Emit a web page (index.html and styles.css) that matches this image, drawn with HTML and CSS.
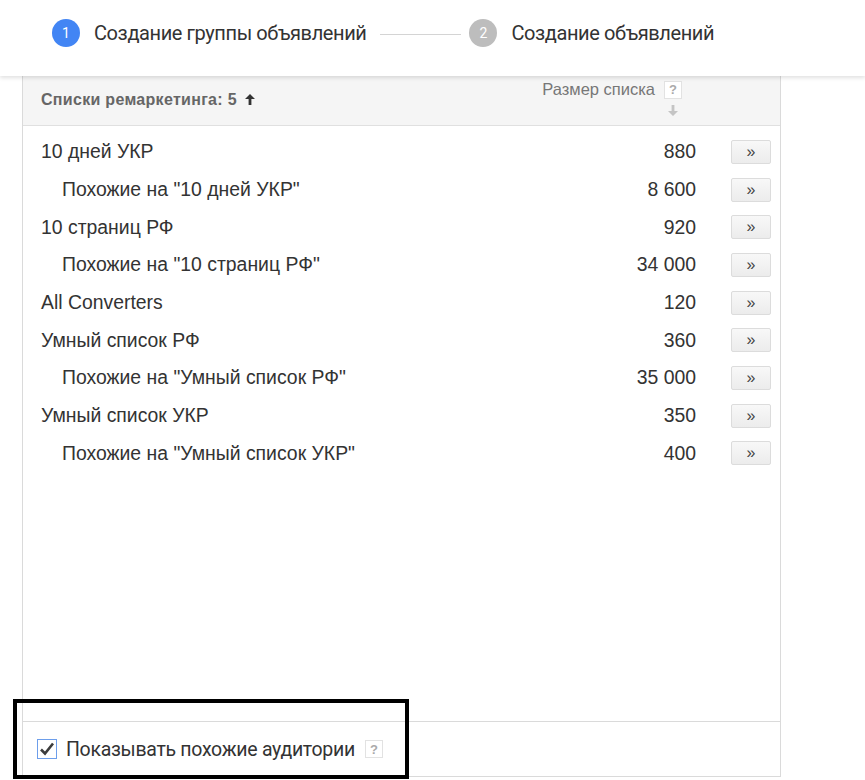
FILE: index.html
```html
<!DOCTYPE html>
<html lang="ru">
<head>
    <meta charset="UTF-8">
    <title>Создание группы объявлений</title>
    <link rel="stylesheet" href="styles.css">
</head>
<body>
    <div class="steps">
        <div class="step active">
            <span class="step-num">1</span>
            <span class="step-title">Создание группы объявлений</span>
        </div>
        <div class="step-line"></div>
        <div class="step">
            <span class="step-num">2</span>
            <span class="step-title">Создание объявлений</span>
        </div>
    </div>

    <div class="panel">
        <div class="panel-head">
            <div class="panel-title">
                Списки ремаркетинга: 5
                <svg class="sort-up" width="10" height="11" viewBox="0 0 10 11"><path d="M5 0 L10 5 L6.4 5 L6.4 11 L3.6 11 L3.6 5 L0 5 Z" fill="#333"/></svg>
            </div>
            <div class="size-col">
                <div class="size-label">Размер списка <span class="help">?</span></div>
                <svg class="sort-down" width="10" height="11" viewBox="0 0 10 11"><path d="M5 11 L10 6 L6.4 6 L6.4 0 L3.6 0 L3.6 6 L0 6 Z" fill="#c4c4c4"/></svg>
            </div>
        </div>

        <ul class="lists">
            <li class="row"><span class="name">10 дней УКР</span><span class="count">880</span><button class="add">&raquo;</button></li>
            <li class="row sub"><span class="name">Похожие на "10 дней УКР"</span><span class="count">8 600</span><button class="add">&raquo;</button></li>
            <li class="row"><span class="name">10 страниц РФ</span><span class="count">920</span><button class="add">&raquo;</button></li>
            <li class="row sub"><span class="name">Похожие на "10 страниц РФ"</span><span class="count">34 000</span><button class="add">&raquo;</button></li>
            <li class="row"><span class="name">All Converters</span><span class="count">120</span><button class="add">&raquo;</button></li>
            <li class="row"><span class="name">Умный список РФ</span><span class="count">360</span><button class="add">&raquo;</button></li>
            <li class="row sub"><span class="name">Похожие на "Умный список РФ"</span><span class="count">35 000</span><button class="add">&raquo;</button></li>
            <li class="row"><span class="name">Умный список УКР</span><span class="count">350</span><button class="add">&raquo;</button></li>
            <li class="row sub"><span class="name">Похожие на "Умный список УКР"</span><span class="count">400</span><button class="add">&raquo;</button></li>
        </ul>

        <div class="panel-foot">
            <label class="similar">
                <span class="checkbox">
                    <svg width="16" height="14" viewBox="0 0 16 14"><path d="M2 7.5 L6 11.5 L14 1.5" fill="none" stroke="#3c3c3c" stroke-width="2.6"/></svg>
                </span>
                Показывать похожие аудитории
                <span class="help">?</span>
            </label>
        </div>
    </div>

    <!-- annotation frame -->
    <div class="highlight"></div>
</body>
</html>
```

FILE: styles.css
```css
* {
    box-sizing: border-box;
    margin: 0;
    padding: 0;
}

body {
    font-family: 'Liberation Sans', Arial, sans-serif;
    color: #333;
    background: #fff;
    width: 865px;
    height: 780px;
    overflow: hidden;
    position: relative;
}

/* Steps header */
.steps {
    position: relative;
    z-index: 2;
    height: 76px;
    display: flex;
    align-items: flex-start;
    padding: 19px 0 0 52px;
    background: #fff;
    box-shadow: 0 2px 4px rgba(0, 0, 0, 0.12);
}

.step {
    display: flex;
    align-items: center;
}

.step-num {
    width: 28px;
    height: 28px;
    border-radius: 50%;
    background: #bdbdbd;
    color: #fff;
    font-family: 'Roboto', sans-serif;
    font-size: 14px;
    display: flex;
    align-items: center;
    justify-content: center;
}

.step.active .step-num {
    background: #4285f4;
}

.step-title {
    margin-left: 14px;
    font-family: 'Roboto', sans-serif;
    font-size: 20px;
    color: #333;
    letter-spacing: -0.4px;
    margin-top: -1px;
}

.step-line {
    width: 81px;
    height: 1px;
    background: #d4d4d4;
    margin: 15px 8px 0 14px;
}

/* Panel */
.panel {
    margin-left: 22px;
    width: 759px;
    height: 701px;
    border: 1px solid #dadada;
    border-top: none;
    display: flex;
    flex-direction: column;
}

.panel-head {
    height: 50px;
    background: #f5f5f5;
    border-bottom: 1px solid #e0e0e0;
    display: flex;
    padding-left: 18px;
}

.panel-title {
    font-size: 16px;
    font-weight: bold;
    color: #666;
    letter-spacing: 0.3px;
    padding-top: 15px;
}

.sort-up {
    margin-left: 3px;
}

.size-col {
    margin-left: auto;
    margin-right: 98px;
    padding-top: 4px;
    display: flex;
    flex-direction: column;
    align-items: flex-end;
}

.size-label {
    font-size: 16.5px;
    color: #777;
    display: flex;
    align-items: center;
}

.help {
    display: inline-flex;
    align-items: center;
    justify-content: center;
    width: 18px;
    height: 18px;
    margin-left: 9px;
    border: 1px solid #e2e2e2;
    background: #fff;
    color: #aaa;
    font-family: 'Liberation Sans', Arial, sans-serif;
    font-size: 13px;
    font-weight: bold;
    letter-spacing: 0;
}

.sort-down {
    margin: 6px 4px 0 0;
}

/* Lists */
.lists {
    list-style: none;
    flex: 1;
    padding-top: 7px;
}

.row {
    height: 37.7px;
    display: flex;
    align-items: center;
    padding-left: 18px;
    font-size: 19.4px;
    color: #333;
}

.row.sub .name {
    padding-left: 21px;
}

.count {
    margin-left: auto;
    width: 120px;
    text-align: right;
}

.add {
    width: 40px;
    height: 24px;
    margin: 0 9px 0 35px;
    border: 1px solid #dcdcdc;
    border-radius: 2px;
    background: linear-gradient(#f8f8f8, #ececec);
    color: #444;
    font-family: 'Liberation Sans', Arial, sans-serif;
    font-size: 16px;
    line-height: 20px;
    cursor: pointer;
}

/* Footer */
.panel-foot {
    height: 55px;
    border-top: 1px solid #dadada;
    display: flex;
    align-items: center;
    padding-left: 14px;
}

.similar {
    display: flex;
    align-items: center;
    font-family: 'Roboto', sans-serif;
    font-size: 19.5px;
    color: #333;
    letter-spacing: -0.3px;
}

.checkbox {
    width: 20px;
    height: 20px;
    border: 1px solid #6d9eeb;
    background: #fff;
    margin-right: 9px;
    display: flex;
    align-items: center;
    justify-content: center;
}

.similar .help {
    margin-left: 10px;
}

/* annotation frame drawn over the screenshot */
.highlight {
    position: absolute;
    left: 13px;
    top: 699px;
    width: 396px;
    height: 80px;
    border: 4px solid #000;
}
```
